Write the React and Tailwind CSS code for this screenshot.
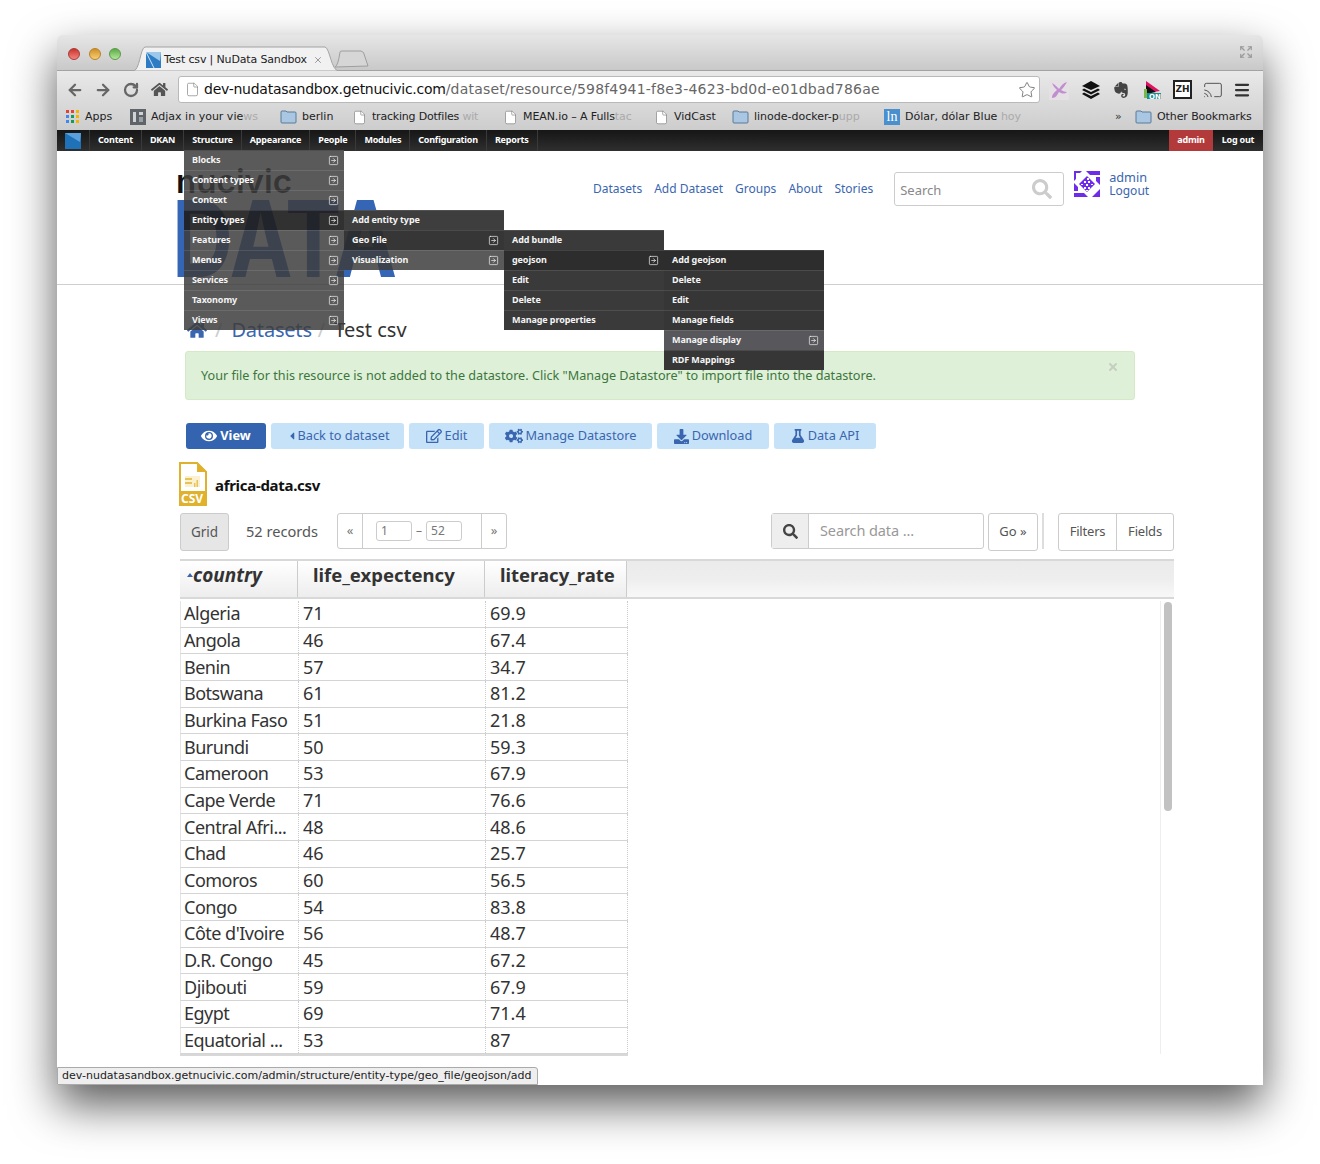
import React from "react";
import { ArrowLeft, ArrowRight, RotateCw, File, Star, Cast, Menu, SquareArrowRight, X, Expand } from "lucide-react";
import { FaEye, FaCaretLeft, FaRegEdit, FaCogs, FaDownload, FaFlask, FaSearch, FaHome } from "react-icons/fa";
import { SiEvernote } from "react-icons/si";

const rows = [
  ["Algeria", "71", "69.9"],
  ["Angola", "46", "67.4"],
  ["Benin", "57", "34.7"],
  ["Botswana", "61", "81.2"],
  ["Burkina Faso", "51", "21.8"],
  ["Burundi", "50", "59.3"],
  ["Cameroon", "53", "67.9"],
  ["Cape Verde", "71", "76.6"],
  ["Central Afri...", "48", "48.6"],
  ["Chad", "46", "25.7"],
  ["Comoros", "60", "56.5"],
  ["Congo", "54", "83.8"],
  ["Côte d'Ivoire", "56", "48.7"],
  ["D.R. Congo", "45", "67.2"],
  ["Djibouti", "59", "67.9"],
  ["Egypt", "69", "71.4"],
  ["Equatorial ...", "53", "87"],
];

const adminLinks = ["Content", "DKAN", "Structure", "Appearance", "People", "Modules", "Configuration", "Reports"];

const level1 = ["Blocks", "Content types", "Context", "Entity types", "Features", "Menus", "Services", "Taxonomy", "Views"];

const MenuRow = ({ label, arrow, className }) => (
  <div className={`h-5 flex items-center justify-between pl-2 pr-[5px] pb-[1px] border-t border-white/10 text-[#f4f4f4] text-[9px] tracking-[-0.1px] font-bold ${className}`}>
    <span>{label}</span>
    {arrow && <SquareArrowRight size={11} strokeWidth={1.5} />}
  </div>
);

const Folder = () => (
  <svg width="17" height="14" viewBox="0 0 17 14" className="shrink-0">
    <path d="M1 3V2q0-1 1-1h4l1 1h8q1 0 1 1v9q0 1-1 1H2q-1 0-1-1z" fill="#a9c6e2" stroke="#5b7a96" />
  </svg>
);

const Bookmark = ({ icon, label, fade, className }) => (
  <div className={`flex items-center gap-[5px] ${className}`}>
    {icon}
    <span className="whitespace-nowrap">
      {label}
      {fade && <span className="text-[#aaa]">{fade}</span>}
    </span>
  </div>
);

const PageIcon = () => <File size={15} strokeWidth={1} className="text-[#777] fill-white shrink-0" />;

const ActionButton = ({ children, className }) => (
  <div className={`h-[26px] rounded-[3px] text-[12.75px] flex items-center justify-center gap-[3px] ${className}`}>
    {children}
  </div>
);

const lightButton = "bg-[#c6e2f8] text-[#3a66b0]";

export default function App() {
  return (
    <div className="w-[1320px] h-[1164px] bg-white pt-[35px] pl-[57px] overflow-hidden font-['Noto_Sans',sans-serif]">
      <div className="relative w-[1206px] h-[1050px] bg-white rounded-t-[5px] overflow-hidden flex flex-col shadow-[0_20px_45px_rgba(0,0,0,0.65)]">
        {/* tab strip */}
        <div className="relative h-[36px] shrink-0 bg-gradient-to-b from-[#e6e6e6] to-[#c9c9c9] border-b border-[#a3a3a3]">
          <div className="absolute left-[11px] top-[13px] flex gap-[8.5px]">
            <div className="w-3 h-3 rounded-full bg-gradient-to-b from-[#c9302c] to-[#f4827c] border border-[#a83a36]" />
            <div className="w-3 h-3 rounded-full bg-gradient-to-b from-[#d28f22] to-[#f6cf74] border border-[#b78224]" />
            <div className="w-3 h-3 rounded-full bg-gradient-to-b from-[#5bab46] to-[#b4e89a] border border-[#5a9a48]" />
          </div>
          <svg width="240" height="25" viewBox="0 0 240 25" className="absolute left-[76px] top-[11px]">
            <path d="M0 25C7 25 7 2 12 1H192C197 2 198 25 206 25Z" fill="#f1f1f1" stroke="#a3a3a3" />
            <path d="M202 21Q205 20 207 6 207 5 209 5H228Q231 5 232 11L235 20Z" fill="#d6d6d6" stroke="#9e9e9e" />
          </svg>
          <div className="absolute left-[89px] top-[17px] flex items-center gap-[3px] text-[11px] tracking-[-0.15px] text-[#222] font-['DejaVu_Sans',sans-serif]">
            <svg width="15" height="16" viewBox="0 0 15 16">
              <rect width="15" height="16" fill="#2e7cc4" />
              <path d="M0 0L14 9 15 0Z" fill="#9cc8ec" />
              <path d="M0 0L8 16" stroke="#cfe4f6" strokeWidth="1" />
            </svg>
            <span>Test csv | NuData Sandbox</span>
            <X size={10} className="ml-[3px] text-[#888]" />
          </div>
          <Expand size={14} className="absolute right-[10px] top-[10px] text-[#999]" />
        </div>

        {/* toolbar */}
        <div className="h-[59px] shrink-0 flex flex-col bg-gradient-to-b from-[#e9e9e9] to-[#cdcdcd] font-['DejaVu_Sans',sans-serif]">
          <div className="h-[33px] pt-[4px] flex items-center pl-[9px] pr-[9px]">
            <ArrowLeft size={18} strokeWidth={3} className="text-[#666]" />
            <ArrowRight size={18} strokeWidth={3} className="ml-[10px] text-[#666]" />
            <RotateCw size={16} strokeWidth={3.4} className="ml-[11px] text-[#666]" />
            <FaHome size={17} className="ml-[12px] text-[#555]" />
            <div className="ml-[10px] w-[862px] h-[27px] bg-white border border-[#b9b9b9] rounded-[3px] flex items-center pl-[6px] pr-[3px]">
              <PageIcon />
              <span className="ml-[4px] text-[14px] tracking-[-0.25px] text-[#111]">dev-nudatasandbox.getnucivic.com</span>
              <span className="text-[14px] tracking-[0.2px] text-[#666]">/dataset/resource/598f4941-f8e3-4623-bd0d-e01dbad786ae</span>
              <Star size={18} strokeWidth={1} className="ml-auto text-[#555]" />
            </div>
            <svg width="20" height="20" viewBox="0 0 20 20" className="ml-[9px]">
              <rect width="20" height="20" fill="#e4e0e4" />
              <path d="M3 3C7 5 9 8 10 9 12 6 14 3 18 2 16 6 13 9 12 10 14 11 16 12 18 12 15 15 12 13 10 12 8 15 7 18 3 18 3 14 6 12 8 10 6 8 4 6 3 3Z" fill="#c08fd0" />
            </svg>
            <svg width="20" height="20" viewBox="0 0 20 20" className="ml-[12px]">
              <path d="M10 1L19 6 10 10 1 6Z" fill="#111" />
              <path d="M3 8.5L10 12 17 8.5 19 10 10 14.5 1 10Z" fill="#111" />
              <path d="M3 12.5L10 16 17 12.5 19 14 10 19 1 14Z" fill="#111" />
            </svg>
            <SiEvernote size={16} className="ml-[12px] text-[#444]" />
            <svg width="20" height="20" viewBox="0 0 20 20" className="ml-[13px]">
              <path d="M4 1L18 11 4 13Z" fill="#e0115f" />
              <path d="M4 5L14 12 4 14Z" fill="#111" />
              <rect x="2" y="9" width="3" height="9" fill="#7ab648" />
              <rect x="5" y="13" width="14" height="6" fill="#1a8f8f" />
              <text x="7" y="19" fontSize="7" fontWeight="700" fill="#fff">ON</text>
            </svg>
            <div className="ml-[11px] w-[19px] h-[19px] border-2 border-[#222] bg-white flex items-center justify-center text-[9px] font-bold text-[#222]">ZH</div>
            <Cast size={20} strokeWidth={1.2} className="ml-[11px] text-[#555]" />
            <Menu size={18} strokeWidth={3} className="ml-[10px] text-[#333]" />
          </div>
          <div className="h-[26px] flex items-center pl-[9px] text-[11px] text-[#222]">
            <Bookmark
              label="Apps"
              className="w-[64px]"
              icon={
                <svg width="14" height="14" viewBox="0 0 14 14">
                  <rect x="0" y="0" width="3" height="3" fill="#e34234" />
                  <rect x="5" y="0" width="3" height="3" fill="#e34234" />
                  <rect x="10" y="0" width="3" height="3" fill="#f4b400" />
                  <rect x="0" y="5" width="3" height="3" fill="#4285f4" />
                  <rect x="5" y="5" width="3" height="3" fill="#0f9d58" />
                  <rect x="10" y="5" width="3" height="3" fill="#f4b400" />
                  <rect x="0" y="10" width="3" height="3" fill="#4285f4" />
                  <rect x="5" y="10" width="3" height="3" fill="#0f9d58" />
                  <rect x="10" y="10" width="3" height="3" fill="#f4b400" />
                </svg>
              }
            />
            <Bookmark
              label="Adjax in your vie"
              fade="ws"
              className="w-[150px]"
              icon={
                <svg width="16" height="16" viewBox="0 0 16 16">
                  <rect width="16" height="16" fill="#5f6469" />
                  <rect x="3" y="3" width="3" height="10" fill="#cfd3d6" />
                  <rect x="9" y="3" width="4" height="3" fill="#cfd3d6" />
                  <rect x="9" y="8" width="4" height="5" fill="#9aa0a5" />
                </svg>
              }
            />
            <Bookmark label="berlin" className="w-[72px]" icon={<Folder />} />
            <Bookmark label="tracking Dotfiles " fade="wit" className="w-[151px] tracking-[-0.2px]" icon={<PageIcon />} />
            <Bookmark label="MEAN.io – A Fulls" fade="tac" className="w-[151px] tracking-[-0.1px]" icon={<PageIcon />} />
            <Bookmark label="VidCast" className="w-[78px]" icon={<PageIcon />} />
            <Bookmark label="linode-docker-p" fade="upp" className="w-[152px]" icon={<Folder />} />
            <Bookmark
              label="Dólar, dólar Blue "
              fade="hoy"
              className="w-[231px]"
              icon={<div className="w-4 h-4 bg-[#4a90cf] text-white text-[14px] leading-4 text-center font-['Liberation_Serif',serif]">ln</div>}
            />
            <span className="w-[20px] text-[#333]">»</span>
            <Bookmark label="Other Bookmarks" className="tracking-[-0.1px]" icon={<Folder />} />
          </div>
        </div>

        {/* drupal admin bar */}
        <div className="relative h-[21px] shrink-0 flex items-center bg-gradient-to-b from-[#161616] to-[#2f2f2f] text-white text-[9px] tracking-[-0.2px] font-bold">
          <div className="w-[33px] h-[21px] flex items-center pl-[8px] border-r border-[#3a3a3a]">
            <svg width="16" height="16" viewBox="0 0 16 16">
              <rect width="16" height="16" fill="#1f72b8" />
              <path d="M0 0L15 9 16 0Z" fill="#5aa0dc" />
            </svg>
          </div>
          {adminLinks.map((label) => (
            <div key={label} className="h-[21px] flex items-center px-[8px] pb-[1px] border-r border-[#3a3a3a]">
              {label}
            </div>
          ))}
          <div className="ml-auto h-[21px] w-[44px] pb-[1px] bg-[#b33a3a] flex items-center justify-center">admin</div>
          <div className="w-[50px] pb-[1px] text-center">Log out</div>
        </div>

        {/* page */}
        <div className="flex-1 min-h-0">
          <div className="h-[134px] border-b border-[#cfcfcf] flex pl-[119px] pt-[21px]">
            <div className="w-[417px] shrink-0">
              <svg width="240" height="110" viewBox="0 0 240 110" className="overflow-visible">
                <text x="0" y="21" fontFamily="Inter" fontWeight="600" fontSize="33" textLength="116" lengthAdjust="spacingAndGlyphs" fill="#111">nucivic</text>
                <text x="-4" y="105" fontFamily="Inter" fontWeight="700" fontSize="106" textLength="225" lengthAdjust="spacingAndGlyphs" fill="#3565b5">DATA</text>
              </svg>
            </div>
            <div className="flex items-start gap-3 pt-[8px] text-[12px] text-[#3a66b0]">
              <span>Datasets</span>
              <span>Add Dataset</span>
              <span>Groups</span>
              <span>About</span>
              <span>Stories</span>
            </div>
            <div className="ml-[21px] w-[170px] h-[34px] border border-[#ccc] rounded-[3px] flex items-center justify-between pl-[5px] pr-[11px] text-[13px] text-[#888]">
              <span className="pt-[3px]">Search</span>
              <FaSearch size={20} className="text-[#ccc]" />
            </div>
            <svg width="26" height="26" viewBox="0 0 26 26" className="ml-[10px] shrink-0 -mt-[1px]">
              <path d="M0 0H8L6 2H2V8L0 10ZM12 0H26V4H16ZM26 6V14L22 10V6ZM26 18V26H18L22 22ZM14 26H0V22H10ZM0 20V12L4 16V20Z" fill="#6f2bea" />
              <path d="M13 5L21 13 13 21 5 13Z" fill="#6f2bea" />
              <path d="M13 7h2v2h-2zM10 10h2v2h-2zM14 10h2v2h-2zM7 13h2v1H7zM12 13h2v2h-2zM17 13h2v1h-2zM10 16h2v2h-2zM14 16h2v2h-2zM12 19h2v1h-2z" fill="#fff" />
            </svg>
            <div className="ml-[9px] -mt-[1px] flex flex-col text-[12.7px] leading-[13px] text-[#3a66b0]">
              <span>admin</span>
              <span className="text-[12px]">Logout</span>
            </div>
          </div>

          <div className="pl-[128px]">
            <div className="h-[30px] mt-[30px] flex items-center text-[20px] text-[#3a66b0]">
              <FaHome size={20} className="ml-[2px]" />
              <span className="ml-[8px] text-[#ccc]">/</span>
              <span className="ml-[9px] tracking-[-0.2px]">Datasets</span>
              <span className="ml-[6px] text-[#ccc]">/</span>
              <span className="ml-[9px] text-[#333]">Test csv</span>
            </div>
            <div className="relative mt-[6px] w-[950px] h-[49px] rounded-[3px] bg-[#dff0d8] border border-[#d6e9c6] flex items-center pl-[15px] text-[12.65px] text-[#3c763d]">
              Your file for this resource is not added to the datastore. Click "Manage Datastore" to import file into the datastore.
              <X size={12} strokeWidth={4} className="absolute right-[15px] top-[9px] text-[#c5cfc0]" />
            </div>
            <div className="mt-[23px] ml-[1px] flex gap-[5px]">
              <ActionButton className="w-[80px] bg-[#3464b0] text-white font-bold">
                <FaEye size={16} />
                View
              </ActionButton>
              <ActionButton className={`w-[133px] ${lightButton}`}>
                <FaCaretLeft size={12} className="-mr-[3px]" />
                Back to dataset
              </ActionButton>
              <ActionButton className={`w-[75px] ${lightButton}`}>
                <FaRegEdit size={16} />
                Edit
              </ActionButton>
              <ActionButton className={`w-[163px] ${lightButton}`}>
                <FaCogs size={18} />
                Manage Datastore
              </ActionButton>
              <ActionButton className={`w-[112px] ${lightButton}`}>
                <FaDownload size={15} />
                Download
              </ActionButton>
              <ActionButton className={`w-[102px] ${lightButton}`}>
                <FaFlask size={14} />
                Data API
              </ActionButton>
            </div>
          </div>

          <div className="pl-[123px] w-[1117px]">
            <div className="mt-[13px] h-[44px] flex items-center gap-[8px] -ml-[1px]">
              <svg width="28" height="44" viewBox="0 0 28 44">
                <path d="M1 1H18L27 10V43H1Z" fill="#fff" stroke="#e0b12c" strokeWidth="2" />
                <path d="M18 0L28 10H18Z" fill="#e0b12c" />
                <rect x="0" y="29" width="28" height="15" fill="#e0b12c" />
                <rect x="6" y="14" width="15" height="11" fill="#fbf1cf" />
                <path d="M6 16h7v2H6zM6 20h7v2H6zM15 21h1.500v4H15zM17.500 18h1.500v7h-1.500z" fill="#e6c35a" />
                <text x="2" y="41" fontSize="12" fontWeight="700" fill="#fff">CSV</text>
              </svg>
              <span className="pt-[2px] text-[15px] font-bold tracking-[-0.3px] text-[#111]">africa-data.csv</span>
            </div>

            <div className="mt-[7px] h-[38px] flex items-start text-[#555]">
              <div className="w-[49px] h-[38px] bg-[#e6e6e6] border border-[#ccc] rounded-[3px] flex items-center justify-center text-[13.5px]">Grid</div>
              <span className="ml-[17px] h-[36px] leading-[36px] text-[14.6px]">52 records</span>
              <div className="ml-[19px] w-[170px] h-[36px] border border-[#ccc] rounded-[3px] flex items-center text-[13px] text-[#777]">
                <div className="w-[25px] h-full flex items-center justify-center border-r border-[#ccc]">«</div>
                <div className="flex-1 flex items-center pl-[13px] gap-[4px] text-[12px]">
                  <div className="w-[36px] h-[20px] border border-[#ccc] rounded-[3px] pl-[4px] leading-[18px]">1</div>
                  –
                  <div className="w-[36px] h-[20px] border border-[#ccc] rounded-[3px] pl-[4px] leading-[18px]">52</div>
                </div>
                <div className="w-[25px] h-full flex items-center justify-center border-l border-[#ccc]">»</div>
              </div>
              <div className="ml-auto w-[213px] h-[36px] border border-[#ccc] rounded-[3px] flex items-center">
                <div className="w-[37px] h-full bg-[#eee] border-r border-[#ccc] flex items-center justify-center">
                  <FaSearch size={15} className="text-[#444]" />
                </div>
                <span className="pl-[11px] text-[14.5px] tracking-[-0.1px] text-[#999]">Search data ...</span>
              </div>
              <div className="ml-[4px] w-[50px] h-[38px] border border-[#ccc] rounded-[3px] flex items-center justify-center text-[13px]">Go »</div>
              <div className="ml-[4px] w-[2px] h-[36px] bg-[#ddd]" />
              <div className="ml-[14px] w-[116px] h-[38px] border border-[#ccc] rounded-[3px] flex items-center text-[13px] tracking-[-0.2px]">
                <div className="w-[58px] h-full flex items-center justify-center border-r border-[#ccc]">Filters</div>
                <div className="flex-1 text-center">Fields</div>
              </div>
            </div>

            <div className="mt-[8px] relative">
              <div className="h-[40px] border-y-2 border-[#d8d8d8] bg-gradient-to-b from-[#ebebeb] via-[#eeeeee] to-[#f8f8f8] flex text-[#333] font-bold">
                <div className="w-[118px] h-full bg-gradient-to-b from-white to-[#ededed] border-r border-[#ccc] flex items-center pl-[7px] pb-[8px] text-[19px] italic">
                  <span className="w-0 h-0 border-x-[3px] border-x-transparent border-b-[4px] border-b-[#3a66b0]" />
                  country
                </div>
                <div className="w-[187px] h-full bg-gradient-to-b from-white to-[#ededed] border-r border-[#ccc] flex items-center pl-[15px] pb-[8px] text-[18.5px]">life_expectency</div>
                <div className="w-[142px] h-full bg-gradient-to-b from-white to-[#ededed] border-r border-[#ccc] flex items-center pl-[15px] pb-[8px] text-[18.5px]">literacy_rate</div>
              </div>
              <div className="flex pt-[2px]">
                <div className="w-[448px] shrink-0 border-b-2 border-[#d8d8d8]">
                  {rows.map((row) => (
                    <div key={row[0]} className="h-[26.67px] flex items-center border-b border-[#d4d4d4] border-l border-l-[#e4e4e4] text-[18px] text-[#333]">
                      <div className="w-[118px] h-full flex items-center pl-[3px] border-r border-dotted border-[#ccc] whitespace-nowrap tracking-[-0.5px]">{row[0]}</div>
                      <div className="w-[187px] h-full flex items-center pl-[4px] border-r border-dotted border-[#ccc]">{row[1]}</div>
                      <div className="w-[142px] h-full flex items-center pl-[4px] border-r border-dotted border-[#ccc]">{row[2]}</div>
                    </div>
                  ))}
                </div>
                <div className="flex-1 flex justify-end">
                  <div className="w-[14px] h-[453px] border-l border-[#eee] flex justify-center pt-[1px]">
                    <div className="w-[8px] h-[209px] rounded-full bg-[#c2c2c2]" />
                  </div>
                </div>
              </div>
            </div>
          </div>
        </div>

        {/* status bubble */}
        <div className="absolute left-0 bottom-0 w-[481px] h-[18px] bg-[#eeeeee] border border-[#aaa] rounded-tr-[3px] pl-[4px] text-[11px] leading-[16px] text-[#222] font-['DejaVu_Sans',sans-serif] whitespace-nowrap overflow-hidden">
          dev-nudatasandbox.getnucivic.com/admin/structure/entity-type/geo_file/geojson/add
        </div>

        {/* structure flyout menus */}
        <div className="absolute left-[127px] top-[115px] w-[160px] bg-[#3d3d3d]/85">
          {level1.map((label) => (
            <MenuRow key={label} label={label} arrow className={label === "Entity types" ? "bg-black/45" : ""} />
          ))}
        </div>
        <div className="absolute left-[287px] top-[175px] w-[160px]">
          <MenuRow label="Add entity type" className="bg-[#3e3e3e]" />
          <MenuRow label="Geo File" arrow className="bg-[#2b2b2b]/95" />
          <MenuRow label="Visualization" arrow className="bg-[#3d3d3d]/85" />
        </div>
        <div className="absolute left-[447px] top-[195px] w-[160px] bg-[#3a3a3a]">
          <MenuRow label="Add bundle" />
          <MenuRow label="geojson" arrow className="bg-[#2d2d2d]" />
          <MenuRow label="Edit" />
          <MenuRow label="Delete" />
          <MenuRow label="Manage properties" />
        </div>
        <div className="absolute left-[607px] top-[215px] w-[160px] bg-[#363636]">
          <MenuRow label="Add geojson" className="bg-[#2d2d2d]" />
          <MenuRow label="Delete" />
          <MenuRow label="Edit" />
          <MenuRow label="Manage fields" />
          <MenuRow label="Manage display" arrow className="bg-[#58585c]" />
          <MenuRow label="RDF Mappings" />
        </div>
      </div>
    </div>
  );
}
